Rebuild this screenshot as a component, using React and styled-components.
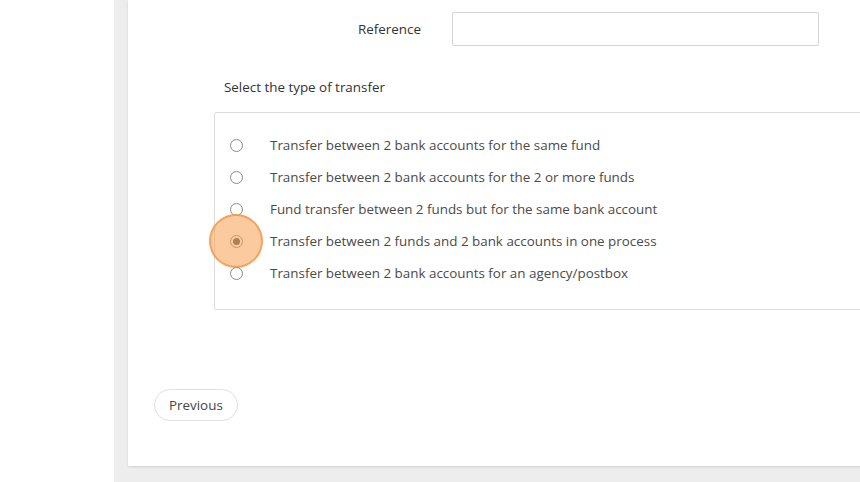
import React from 'react'
import styled, { createGlobalStyle } from 'styled-components'

const GlobalStyle = createGlobalStyle`
  html, body {
    margin: 0;
    padding: 0;
    background: #ffffff;
    font-family: "Open Sans", "Noto Sans", sans-serif;
    color: #333333;
  }
  * { box-sizing: border-box; }
`

const options = [
  'Transfer between 2 bank accounts for the same fund',
  'Transfer between 2 bank accounts for the 2 or more funds',
  'Fund transfer between 2 funds but for the same bank account',
  'Transfer between 2 funds and 2 bank accounts in one process',
  'Transfer between 2 bank accounts for an agency/postbox',
]

const Page = styled.div`
  display: flex;
  width: 860px;
  height: 482px;
  overflow: hidden;
`

const Sidebar = styled.div`
  flex: 0 0 114px;
  background: #ffffff;
`

const Main = styled.main`
  flex: 1;
  background: #eeeded;
  padding: 0 0 16px 14px;
  display: flex;
  min-width: 0;
`

const Card = styled.section`
  flex: 0 0 800px;
  background: #ffffff;
  box-shadow: 0 1px 2px rgba(0, 0, 0, 0.12);
  padding: 12px 0 0 0;
  display: flex;
  flex-direction: column;
  font-size: 13.4px;
`

const FieldRow = styled.div`
  display: flex;
  align-items: center;
  gap: 31px;
`

const Label = styled.label`
  width: 293px;
  text-align: right;
  color: #333;
`

const TextInput = styled.input`
  width: 367px;
  height: 34px;
  border: 1px solid #d4d4d4;
  border-radius: 2px;
  font: inherit;
  padding: 0 8px;
  outline: none;
`

const Group = styled.div`
  margin: 31px 0 0 86px;
`

const GroupTitle = styled.div`
  padding-left: 10px;
  line-height: 20px;
  color: #333;
`

const OptionsBox = styled.div`
  position: relative;
  margin-top: 15px;
  width: 700px;
  border: 1px solid #dcdcdc;
  border-radius: 2px;
  padding: 16px 0 20px 15px;
`

const OptionRow = styled.div`
  position: relative;
  display: flex;
  align-items: center;
  height: 32px;
  gap: 27px;
  color: #4a4a4a;
`

const Radio = styled.span`
  position: relative;
  width: 13px;
  height: 13px;
  flex: 0 0 13px;
  border: 1px solid #8a8a8a;
  border-radius: 50%;
  background: #fff;
  &::after {
    content: '';
    display: ${p => (p.$checked ? 'block' : 'none')};
    position: absolute;
    top: 2px;
    left: 2px;
    width: 7px;
    height: 7px;
    border-radius: 50%;
    background: #5a5a5a;
  }
`

const Highlight = styled.span`
  position: absolute;
  left: -21px;
  top: -11px;
  width: 54px;
  height: 54px;
  border-radius: 50%;
  background: rgba(247, 160, 80, 0.55);
  border: 2px solid rgba(240, 150, 70, 0.75);
  pointer-events: none;
`

const Footer = styled.div`
  margin: 79px 0 0 26px;
`

const Button = styled.button`
  height: 32px;
  padding: 0 14px;
  border: 1px solid #e0e0e0;
  border-radius: 16px;
  background: #ffffff;
  font: inherit;
  color: #444;
`

const App = () => {
  const selected = 3
  return (
    <Page>
      <GlobalStyle />
      <Sidebar />
      <Main>
        <Card>
          <FieldRow>
            <Label>Reference</Label>
            <TextInput type="text" />
          </FieldRow>
          <Group>
            <GroupTitle>Select the type of transfer</GroupTitle>
            <OptionsBox>
              {options.map((text, i) => (
                <OptionRow key={text}>
                  <Radio $checked={i === selected} />
                  {text}
                  {i === selected && <Highlight />}
                </OptionRow>
              ))}
            </OptionsBox>
          </Group>
          <Footer>
            <Button type="button">Previous</Button>
          </Footer>
        </Card>
      </Main>
    </Page>
  )
}

export default App
